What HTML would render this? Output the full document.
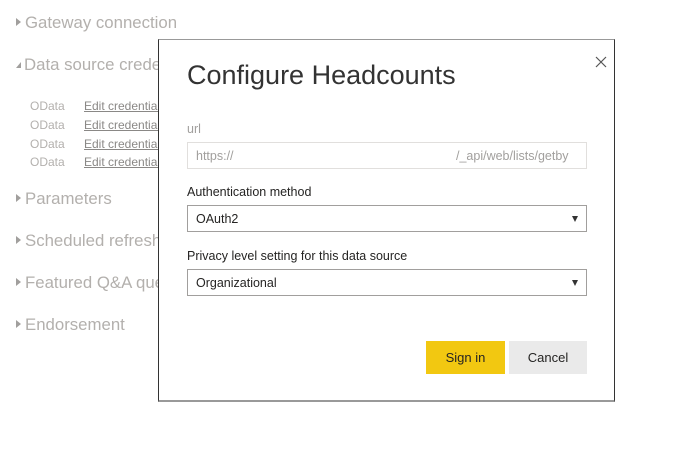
<!DOCTYPE html>
<html><head><style>
*{margin:0;padding:0;box-sizing:border-box}
body{width:692px;height:453px;background:#fff;font-family:"Liberation Sans",sans-serif;position:relative;overflow:hidden}
.sec{position:absolute;left:16px;font-size:16.8px;color:#b3b0ad;white-space:nowrap}
.sec .tri{display:inline-block;width:0;height:0;border-top:4px solid transparent;border-bottom:4px solid transparent;border-left:5px solid #a19f9d;margin-right:4px;vertical-align:2px}
.row{position:absolute;left:30px;font-size:12px;color:#b3b0ad;white-space:nowrap}
.row u{position:absolute;left:54px;color:#8a8886}
.dlg{position:absolute;left:158px;top:39px;width:457px;height:363px;background:#fff;border:1px solid #333;border-top-color:#999;border-bottom:2px solid #999}
.t{position:absolute;left:28px;top:20px;font-size:27px;color:#333}
.lbl{position:absolute;left:28px;font-size:12.5px;color:#252423}
.box{position:absolute;left:28px;width:400px;height:27px;border:1px solid #c8c6c4;font-size:12.5px;color:#252423;padding:6px 0 0 8px;white-space:nowrap;overflow:hidden}
.arr{position:absolute;right:8px;top:10px;width:0;height:0;border-left:3.5px solid transparent;border-right:3.5px solid transparent;border-top:6px solid #333}
.btn{position:absolute;top:301px;height:33px;font-size:13px;text-align:center;line-height:33px;color:#252423}
</style></head><body>
<div class="sec" style="top:13px"><span class="tri"></span>Gateway connection</div>
<div class="sec" style="top:55px"><span class="tri" style="border-left:5px solid transparent;border-top:0;border-bottom:6px solid #a19f9d;border-right:0;margin-right:3px"></span>Data source credentials</div>
<div class="row" style="top:99px">OData<u>Edit credentials</u></div>
<div class="row" style="top:118px">OData<u>Edit credentials</u></div>
<div class="row" style="top:137px">OData<u>Edit credentials</u></div>
<div class="row" style="top:155px">OData<u>Edit credentials</u></div>
<div class="sec" style="top:189px"><span class="tri"></span>Parameters</div>
<div class="sec" style="top:231px"><span class="tri"></span>Scheduled refresh</div>
<div class="sec" style="top:273px"><span class="tri"></span>Featured Q&amp;A questions</div>
<div class="sec" style="top:315px"><span class="tri"></span>Endorsement</div>
<div class="dlg">
<svg style="position:absolute;left:436px;top:16px" width="12" height="12"><path d="M1 1L11 11M11 1L1 11" stroke="#555" stroke-width="1.2"/></svg>
<div class="t">Configure Headcounts</div>
<div class="lbl" style="top:82px;color:#a19f9d">url</div>
<div class="box" style="top:102px;color:#a19f9d;border-color:#e1dfdd">https://<span style="position:absolute;left:268px">/_api/web/lists/getby</span></div>
<div class="lbl" style="top:145px">Authentication method</div>
<div class="box" style="top:165px;border-color:#a19f9d">OAuth2<span class="arr"></span></div>
<div class="lbl" style="top:209px">Privacy level setting for this data source</div>
<div class="box" style="top:229px;border-color:#a19f9d">Organizational<span class="arr"></span></div>
<div class="btn" style="left:267px;width:79px;background:#f2c811">Sign in</div>
<div class="btn" style="left:350px;width:78px;background:#eaeaea">Cancel</div>
</div>
</body></html>
